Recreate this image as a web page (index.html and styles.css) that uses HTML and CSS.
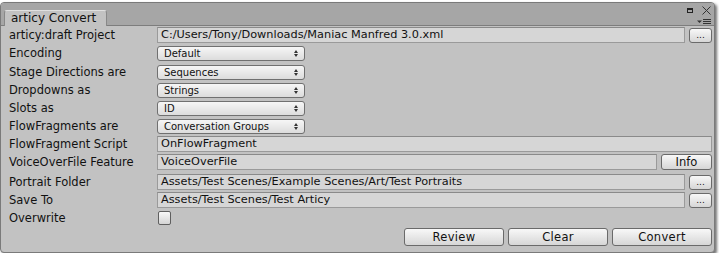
FILE: index.html
```html
<!DOCTYPE html>
<html lang="en">
<head>
    <meta charset="UTF-8">
    <title>articy Convert</title>
    <link rel="stylesheet" href="styles.css">
</head>
<body>
    <div class="window">
        <div class="titlebar">
            <div class="tab">articy Convert</div>
            <div class="win-icons">
                <svg class="icon-max" width="6" height="5" viewBox="0 0 6 5"><rect x="0.5" y="0.5" width="5" height="4" fill="none" stroke="#222"/><rect x="0" y="0" width="6" height="2" fill="#222"/></svg>
                <svg class="icon-close" width="9" height="9" viewBox="0 0 9 9"><path d="M0.5 0.5 L8.5 8.5 M8.5 0.5 L0.5 8.5" stroke="#333" stroke-width="1"/></svg>
                <svg class="icon-menu" width="15" height="6" viewBox="0 0 15 6"><path d="M0 1.5 L5 1.5 L2.5 4 Z" fill="#333"/><path d="M6 0.5 H14 M6 2.5 H14 M6 4.5 H14" stroke="#333" stroke-width="1"/></svg>
            </div>
        </div>
        <div class="content">
            <div class="row">
                <span class="label">articy:draft Project</span>
                <div class="field">C:/Users/Tony/Downloads/Maniac Manfred 3.0.xml</div>
                <button class="btn small">...</button>
            </div>
            <div class="row gap-after">
                <span class="label">Encoding</span>
                <div class="popup">Default<span class="arrows"></span></div>
            </div>
            <div class="row">
                <span class="label">Stage Directions are</span>
                <div class="popup">Sequences<span class="arrows"></span></div>
            </div>
            <div class="row">
                <span class="label">Dropdowns as</span>
                <div class="popup">Strings<span class="arrows"></span></div>
            </div>
            <div class="row">
                <span class="label">Slots as</span>
                <div class="popup">ID<span class="arrows"></span></div>
            </div>
            <div class="row">
                <span class="label">FlowFragments are</span>
                <div class="popup">Conversation Groups<span class="arrows"></span></div>
            </div>
            <div class="row">
                <span class="label">FlowFragment Script</span>
                <div class="field">OnFlowFragment</div>
            </div>
            <div class="row">
                <span class="label">VoiceOverFile Feature</span>
                <div class="field">VoiceOverFile</div>
                <button class="btn info">Info</button>
            </div>
            <div class="row spaced">
                <span class="label">Portrait Folder</span>
                <div class="field">Assets/Test Scenes/Example Scenes/Art/Test Portraits</div>
                <button class="btn small">...</button>
            </div>
            <div class="row">
                <span class="label">Save To</span>
                <div class="field">Assets/Test Scenes/Test Articy</div>
                <button class="btn small">...</button>
            </div>
            <div class="row">
                <span class="label">Overwrite</span>
                <span class="checkbox"></span>
            </div>
            <div class="actions">
                <button class="btn wide">Review</button>
                <button class="btn wide">Clear</button>
                <button class="btn wide">Convert</button>
            </div>
        </div>
    </div>
</body>
</html>
```

FILE: styles.css
```css
/* Editor window look */
body {
    margin: 0;
    background: #ffffff;
    font-family: "DejaVu Sans", sans-serif;
    color: #111;
}

.window {
    width: 713px;
    height: 249px;
    margin-top: 2px;
    background: #c2c2c2;
    border: 1px solid #7a7a7a;
    border-radius: 4px;
    box-shadow: 2px 2px 3px rgba(0, 0, 0, 0.55);
    overflow: hidden;
    display: flex;
    flex-direction: column;
}

.titlebar {
    height: 22px;
    flex-shrink: 0;
    background: #a6a6a6;
    border-bottom: 1px solid #7d7d7d;
    display: flex;
    align-items: flex-end;
    justify-content: space-between;
    padding-left: 3px;
}

.tab {
    height: 15px;
    width: 95px;
    margin-bottom: -1px;
    background: #c2c2c2;
    border: 1px solid #888;
    border-bottom: none;
    border-top-color: #e0e0e0;
    border-radius: 3px 3px 0 0;
    font-size: 12px;
    line-height: 15px;
    padding-left: 6px;
    box-sizing: content-box;
}

.win-icons {
    position: relative;
    width: 29px;
    height: 22px;
}

.icon-max {
    position: absolute;
    left: 2px;
    top: 5px;
}

.icon-close {
    position: absolute;
    left: 17px;
    top: 3px;
}

.icon-menu {
    position: absolute;
    left: 12px;
    top: 16px;
}

.content {
    padding: 0 2px 0 8px;
    display: flex;
    flex-direction: column;
}

.row {
    height: 18px;
    display: flex;
    align-items: center;
}

.row.gap-after {
    margin-bottom: 1px;
}

.row.spaced {
    margin-top: 2px;
}

.label {
    width: 148px;
    font-size: 11.5px;
    white-space: nowrap;
}

.field {
    flex: 1;
    height: 14px;
    background: #d6d6d6;
    border: 1px solid #9a9a9a;
    border-top-color: #8a8a8a;
    font-size: 11.3px;
    line-height: 14px;
    padding-left: 3px;
    white-space: nowrap;
    overflow: hidden;
}

.popup {
    position: relative;
    width: 140px;
    height: 13px;
    border: 1px solid #707070;
    border-radius: 3px;
    background: linear-gradient(#f6f6f6, #dcdcdc);
    font-size: 10px;
    line-height: 13px;
    padding-left: 6px;
}

.arrows {
    position: absolute;
    right: 6px;
    top: 3px;
    width: 0;
    height: 0;
    border-left: 2px solid transparent;
    border-right: 2px solid transparent;
    border-bottom: 3px solid #333;
}

.arrows::after {
    content: "";
    position: absolute;
    left: -2px;
    top: 4px;
    border-left: 2px solid transparent;
    border-right: 2px solid transparent;
    border-top: 3px solid #333;
}

.btn {
    height: 16px;
    margin-left: 4px;
    border: 1px solid #6a6a6a;
    border-radius: 3px;
    background: linear-gradient(#f8f8f8, #d6d6d6);
    font-family: "DejaVu Sans", sans-serif;
    color: #111;
    padding: 0;
    box-sizing: border-box;
}

.btn.small {
    width: 23px;
    height: 15px;
    font-size: 9px;
    line-height: 10px;
}

.btn.info {
    width: 51px;
    font-size: 11.5px;
}

.checkbox {
    width: 11px;
    height: 12px;
    margin-left: 1px;
    border: 1px solid #5f5f5f;
    border-radius: 2px;
    background: linear-gradient(#f8f8f8, #d4d4d4);
}

.actions {
    display: flex;
    justify-content: flex-end;
    margin-top: 1px;
}

.btn.wide {
    width: 100px;
    height: 18px;
    font-size: 11.5px;
    letter-spacing: 0.3px;
}

.btn.wide:first-child {
    margin-left: 0;
}
```
